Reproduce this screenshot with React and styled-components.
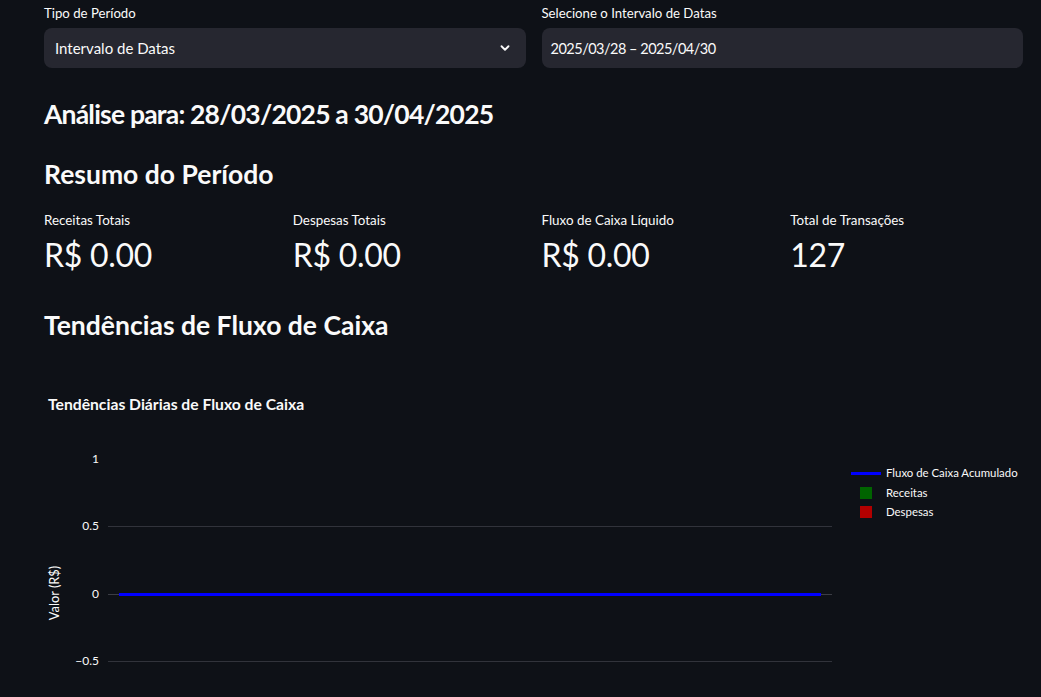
import React from "react";
import styled, { createGlobalStyle } from "styled-components";

const Global = createGlobalStyle`
  html, body { margin: 0; padding: 0; background: #0e1117; }
  body { font-family: "Source Sans Pro", Lato, "Noto Sans", sans-serif; color: #fafafa; }
  * { box-sizing: border-box; }
`;

const Page = styled.div`
  padding: 2px 18px 0 44px;
  display: flex;
  flex-direction: column;
  width: 1041px;
  height: 697px;
  overflow: hidden;
`;

const Row = styled.div`
  display: grid;
  grid-template-columns: repeat(${(p) => p.cols}, 1fr);
  column-gap: 16px;
  margin-top: ${(p) => p.mt || 0}px;
`;

const Field = styled.div`
  display: flex;
  flex-direction: column;
  gap: 4px;
`;

const Label = styled.div`
  font-size: 13.2px;
  line-height: 22px;
  color: #fafafa;
`;

const Input = styled.div`
  height: 40px;
  border-radius: 8px;
  background: #262730;
  display: flex;
  align-items: center;
  justify-content: space-between;
  padding: 0 14px 0 ${(p) => p.pl || 11}px;
  font-size: ${(p) => p.fs || 15}px;
  letter-spacing: ${(p) => p.ls || 0}px;
  color: #fafafa;
`;

const Heading = styled.h3`
  margin: ${(p) => p.mt}px 0 0;
  font-size: 26.5px;
  font-weight: 700;
  letter-spacing: ${(p) => p.ls || 0}px;
  line-height: 34px;
  color: #fafafa;
`;

const Metric = styled.div`
  display: flex;
  flex-direction: column;
`;

const MetricLabel = styled.div`
  font-size: 13.4px;
  line-height: 22px;
`;

const MetricValue = styled.div`
  margin-top: 1px;
  font-size: 32px;
  letter-spacing: -0.3px;
  line-height: 46px;
  font-weight: 400;
`;

const ChartBox = styled.div`
  margin-top: 28px;
`;

const Chevron = () => (
  <svg width="14" height="14" viewBox="0 0 24 24" fill="none" stroke="#fafafa" strokeWidth="3.2" strokeLinecap="round" strokeLinejoin="round">
    <polyline points="6 9 12 15 18 9" />
  </svg>
);

const tickStyle = { fontSize: 12, fill: "#fafafa" };

const Chart = () => (
  <svg width="979" height="330" viewBox="0 0 979 330" style={{ display: "block", fontFamily: "inherit" }}>
    <text x="4" y="40" style={{ fontSize: 15.7, fontWeight: 700, fill: "#fafafa" }}>
      Tendências Diárias de Fluxo de Caixa
    </text>
    {[156, 291].map((y) => (
      <line key={y} x1="64" x2="788" y1={y + 0.5} y2={y + 0.5} stroke="#31333b" strokeWidth="1" />
    ))}
    <line x1="64" x2="788" y1="224.5" y2="224.5" stroke="#3b3d45" strokeWidth="1" />
    <line x1="75" x2="777" y1="224.5" y2="224.5" stroke="#0000ff" strokeWidth="3" />
    <g textAnchor="end" style={tickStyle}>
      <text x="55" y="93">1</text>
      <text x="55" y="160">0.5</text>
      <text x="55" y="228">0</text>
      <text x="55" y="295">−0.5</text>
    </g>
    <text transform="translate(15 223) rotate(-90)" textAnchor="middle" style={{ fontSize: 12.8, fill: "#fafafa" }}>
      Valor (R$)
    </text>
    <line x1="807" x2="837" y1="103.5" y2="103.5" stroke="#0000ff" strokeWidth="3" />
    <rect x="816" y="117" width="12" height="12" fill="#006400" />
    <rect x="816" y="136" width="12" height="12" fill="#b20000" />
    <g style={{ fontSize: 11.4, fill: "#fafafa" }}>
      <text x="842" y="107">Fluxo de Caixa Acumulado</text>
      <text x="842" y="127">Receitas</text>
      <text x="842" y="146">Despesas</text>
    </g>
  </svg>
);

const metrics = [
  ["Receitas Totais", "R$ 0.00"],
  ["Despesas Totais", "R$ 0.00"],
  ["Fluxo de Caixa Líquido", "R$ 0.00"],
  ["Total de Transações", "127"],
];

export default function App() {
  return (
    <>
      <Global />
      <Page>
        <Row cols={2}>
          <Field>
            <Label>Tipo de Período</Label>
            <Input>
              <span>Intervalo de Datas</span>
              <Chevron />
            </Input>
          </Field>
          <Field>
            <Label>Selecione o Intervalo de Datas</Label>
            <Input pl={9} fs={14.5} ls={-0.5}>
              <span>2025/03/28 – 2025/04/30</span>
            </Input>
          </Field>
        </Row>
        <Heading mt={29} ls={-0.8}>Análise para: 28/03/2025 a 30/04/2025</Heading>
        <Heading mt={26}>Resumo do Período</Heading>
        <Row cols={4} mt={18}>
          {metrics.map(([l, v]) => (
            <Metric key={l}>
              <MetricLabel>{l}</MetricLabel>
              <MetricValue>{v}</MetricValue>
            </Metric>
          ))}
        </Row>
        <Heading mt={30}>Tendências de Fluxo de Caixa</Heading>
        <ChartBox>
          <Chart />
        </ChartBox>
      </Page>
    </>
  );
}
